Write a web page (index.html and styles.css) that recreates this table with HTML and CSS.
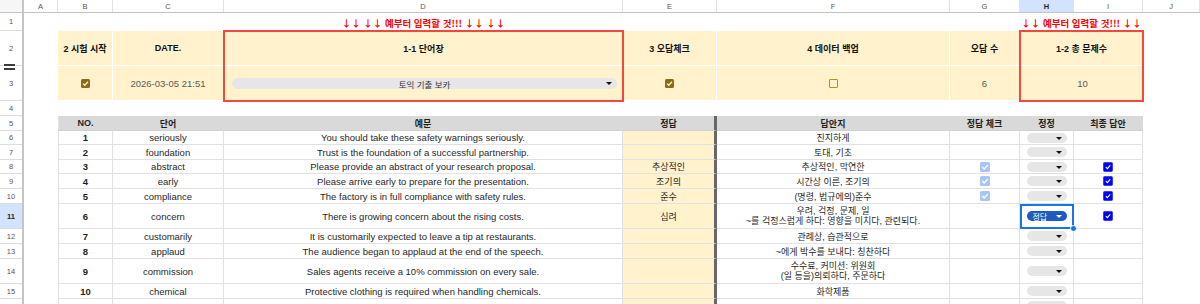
FILE: index.html
```html
<!DOCTYPE html>
<html lang="ko">
<head>
<meta charset="utf-8">
<title>Sheet</title>
<link rel="stylesheet" href="styles.css">
</head>
<body>
<div class="colbar">
  <div class="corner"></div>
  <div class="ch">A</div>
  <div class="ch">B</div>
  <div class="ch">C</div>
  <div class="ch">D</div>
  <div class="ch">E</div>
  <div class="ch">F</div>
  <div class="ch">G</div>
  <div class="ch ch-sel">H</div>
  <div class="ch">I</div>
  <div class="ch">J</div>
</div>
<div class="main">
  <div class="rowbar">
    <div class="rh">1</div>
    <div class="rh">2</div>
    <div class="rh">3</div>
    <div class="rh">4</div>
    <div class="rh">5</div>
    <div class="rh">6</div>
    <div class="rh">7</div>
    <div class="rh">8</div>
    <div class="rh">9</div>
    <div class="rh">10</div>
    <div class="rh rh-sel">11</div>
    <div class="rh">12</div>
    <div class="rh">13</div>
    <div class="rh">14</div>
    <div class="rh">15</div>
    <div class="rh rh-last">16</div>
    <div class="freeze"></div>
  </div>
  <div class="sheet">
    <!-- row 1 -->
    <div></div><div></div><div></div>
    <div class="c title">↓↓ ↓↓ 예부터 입력할 것!!! ↓↓ ↓↓</div>
    <div></div><div></div><div></div>
    <div class="c title span2">↓↓ 예부터 입력할 것!!! ↓↓</div>
    <div></div>
    <!-- row 2 -->
    <div></div>
    <div class="c p p-head">2 시험 시작</div>
    <div class="c p p-head">DATE.</div>
    <div class="box">
      <div class="c p p-head box-top">1-1 단어장</div>
      <div class="c p box-bot">
        <div class="select"><span>토익 기출 보카</span><i class="tri"></i></div>
      </div>
    </div>
    <div class="c p p-head">3 오답체크</div>
    <div class="c p p-head">4 데이터 백업</div>
    <div class="c p p-head">오답 수</div>
    <div class="box span2">
      <div class="c p p-head box-top">1-2 총 문제수</div>
      <div class="c p p-val box-bot">10</div>
    </div>
    <div></div>
    <!-- row 3 -->
    <div></div>
    <div class="c p"><svg class="cbx cb-gold" viewBox="0 0 10 10"><path d="M2.3 5.1 L4.2 7 L7.8 3.1"/></svg></div>
    <div class="c p p-val">2026-03-05 21:51</div>
    <div class="c p"><svg class="cbx cb-gold" viewBox="0 0 10 10"><path d="M2.3 5.1 L4.2 7 L7.8 3.1"/></svg></div>
    <div class="c p"><span class="cb-empty"></span></div>
    <div class="c p p-val">6</div>
    <div></div>
    <!-- row 4 -->
    <div class="gap-row"></div>
    <!-- row 5 header -->
    <div></div>
    <div class="c t th first">NO.</div>
    <div class="c t th">단어</div>
    <div class="c t th">예문</div>
    <div class="c t th sep">정답</div>
    <div class="c t th">답안지</div>
    <div class="c t th">정답 체크</div>
    <div class="c t th">정정</div>
    <div class="c t th">최종 답안</div>
    <div></div>
    <!-- row 6 -->
    <div></div>
    <div class="c t first num">1</div>
    <div class="c t">seriously</div>
    <div class="c t">You should take these safety warnings seriously.</div>
    <div class="c t ans sep"></div>
    <div class="c t ko">진지하게</div>
    <div class="c t"></div>
    <div class="c t"><div class="chip"><i class="tri"></i></div></div>
    <div class="c t"></div>
    <div></div>
    <!-- row 7 -->
    <div></div>
    <div class="c t first num">2</div>
    <div class="c t">foundation</div>
    <div class="c t">Trust is the foundation of a successful partnership.</div>
    <div class="c t ans sep"></div>
    <div class="c t ko">토대, 기초</div>
    <div class="c t"></div>
    <div class="c t"><div class="chip"><i class="tri"></i></div></div>
    <div class="c t"></div>
    <div></div>
    <!-- row 8 -->
    <div></div>
    <div class="c t first num">3</div>
    <div class="c t">abstract</div>
    <div class="c t">Please provide an abstract of your research proposal.</div>
    <div class="c t ans sep ko">추상적인</div>
    <div class="c t ko">추상적인, 막연한</div>
    <div class="c t"><svg class="cbx cb-light" viewBox="0 0 10 10"><path d="M2.3 5.1 L4.2 7 L7.8 3.1"/></svg></div>
    <div class="c t"><div class="chip"><i class="tri"></i></div></div>
    <div class="c t"><svg class="cbx cb-blue" viewBox="0 0 10 10"><path d="M2.3 5.1 L4.2 7 L7.8 3.1"/></svg></div>
    <div></div>
    <!-- row 9 -->
    <div></div>
    <div class="c t first num">4</div>
    <div class="c t">early</div>
    <div class="c t">Please arrive early to prepare for the presentation.</div>
    <div class="c t ans sep ko">조기의</div>
    <div class="c t ko">시간상 이른, 조기의</div>
    <div class="c t"><svg class="cbx cb-light" viewBox="0 0 10 10"><path d="M2.3 5.1 L4.2 7 L7.8 3.1"/></svg></div>
    <div class="c t"><div class="chip"><i class="tri"></i></div></div>
    <div class="c t"><svg class="cbx cb-blue" viewBox="0 0 10 10"><path d="M2.3 5.1 L4.2 7 L7.8 3.1"/></svg></div>
    <div></div>
    <!-- row 10 -->
    <div></div>
    <div class="c t first num">5</div>
    <div class="c t">compliance</div>
    <div class="c t">The factory is in full compliance with safety rules.</div>
    <div class="c t ans sep ko">준수</div>
    <div class="c t ko">(명령, 법규에의)준수</div>
    <div class="c t"><svg class="cbx cb-light" viewBox="0 0 10 10"><path d="M2.3 5.1 L4.2 7 L7.8 3.1"/></svg></div>
    <div class="c t"><div class="chip"><i class="tri"></i></div></div>
    <div class="c t"><svg class="cbx cb-blue" viewBox="0 0 10 10"><path d="M2.3 5.1 L4.2 7 L7.8 3.1"/></svg></div>
    <div></div>
    <!-- row 11 -->
    <div></div>
    <div class="c t first num">6</div>
    <div class="c t">concern</div>
    <div class="c t">There is growing concern about the rising costs.</div>
    <div class="c t ans sep ko">심려</div>
    <div class="c t ko multi">우려, 걱정, 문제, 일<br>~를 걱정스럽게 하다: 영향을 미치다, 관련되다.</div>
    <div class="c t"></div>
    <div class="c t selected"><div class="chip chip-on"><span>정답</span><i class="tri"></i></div><span class="handle"></span></div>
    <div class="c t"><svg class="cbx cb-blue" viewBox="0 0 10 10"><path d="M2.3 5.1 L4.2 7 L7.8 3.1"/></svg></div>
    <div></div>
    <!-- row 12 -->
    <div></div>
    <div class="c t first num">7</div>
    <div class="c t">customarily</div>
    <div class="c t">It is customarily expected to leave a tip at restaurants.</div>
    <div class="c t ans sep"></div>
    <div class="c t ko">관례상, 습관적으로</div>
    <div class="c t"></div>
    <div class="c t"><div class="chip"><i class="tri"></i></div></div>
    <div class="c t"></div>
    <div></div>
    <!-- row 13 -->
    <div></div>
    <div class="c t first num">8</div>
    <div class="c t">applaud</div>
    <div class="c t">The audience began to applaud at the end of the speech.</div>
    <div class="c t ans sep"></div>
    <div class="c t ko">~에게 박수를 보내다: 칭찬하다</div>
    <div class="c t"></div>
    <div class="c t"><div class="chip"><i class="tri"></i></div></div>
    <div class="c t"></div>
    <div></div>
    <!-- row 14 -->
    <div></div>
    <div class="c t first num">9</div>
    <div class="c t">commission</div>
    <div class="c t">Sales agents receive a 10% commission on every sale.</div>
    <div class="c t ans sep"></div>
    <div class="c t ko multi">수수료, 커미션: 위원회<br>(일 등을)의뢰하다, 주문하다</div>
    <div class="c t"></div>
    <div class="c t"><div class="chip"><i class="tri"></i></div></div>
    <div class="c t"></div>
    <div></div>
    <!-- row 15 -->
    <div></div>
    <div class="c t first num">10</div>
    <div class="c t">chemical</div>
    <div class="c t">Protective clothing is required when handling chemicals.</div>
    <div class="c t ans sep"></div>
    <div class="c t ko">화학제품</div>
    <div class="c t"></div>
    <div class="c t"><div class="chip"><i class="tri"></i></div></div>
    <div class="c t"></div>
    <div></div>
    <!-- row 16 -->
    <div></div>
    <div class="c t first num"></div>
    <div class="c t"></div>
    <div class="c t"></div>
    <div class="c t ans sep"></div>
    <div class="c t"></div>
    <div class="c t"></div>
    <div class="c t"><div class="chip"><i class="tri"></i></div></div>
    <div class="c t"></div>
    <div></div>
  </div>
</div>
</body>
</html>
```

FILE: styles.css
```css
* {
  box-sizing: border-box;
  margin: 0;
  padding: 0;
}

body {
  width: 1200px;
  height: 304px;
  overflow: hidden;
  background: #fff;
  font-family: "Liberation Sans", "Noto Sans CJK KR", sans-serif;
  color: #1f1f1f;
}

/* column header bar */
.colbar {
  display: grid;
  grid-template-columns: 24px 34px 55px 111px 399px 94px 233px 70px 54px 69px 1fr;
  height: 13px;
  border-bottom: 1px solid #c4c4c4;
  background: #fff;
}

.corner {
  background: #f6f6f6;
  border-right: 2px solid #c4c4c4;
}

.ch {
  display: flex;
  align-items: center;
  justify-content: center;
  font-size: 7.5px;
  color: #555;
  border-right: 1px solid #e0e0e0;
}

.ch-sel {
  background: #d3e3fd;
  color: #1f1f1f;
  font-weight: bold;
}

/* body */
.main {
  display: flex;
}

.rowbar,
.sheet {
  grid-template-rows: 18px 35px 35px 15px 15px 14px 15px 14px 15px 15px 25px 15px 15px 25px 15px 15px;
}

.rowbar {
  position: relative;
  flex: none;
  width: 24px;
  display: grid;
  border-right: 2px solid #c4c4c4;
}

.rh {
  display: flex;
  align-items: center;
  justify-content: center;
  font-size: 7.5px;
  color: #555;
  border-bottom: 1px solid #dcdcdc;
}

.rh-last {
  align-items: flex-start;
  padding-top: 3px;
}

.rh-sel {
  background: #d3e3fd;
  color: #1f1f1f;
  font-weight: bold;
}

.freeze {
  position: absolute;
  left: 4px;
  top: 51px;
  width: 11px;
  height: 6px;
  border-top: 2px solid #3c3c3c;
  border-bottom: 2px solid #3c3c3c;
}

.sheet {
  flex: 1;
  display: grid;
  grid-template-columns: 34px 55px 111px 399px 94px 233px 70px 54px 69px 1fr;
}

.c {
  display: flex;
  align-items: center;
  justify-content: center;
  white-space: nowrap;
  font-size: 9.5px;
}

.span2 {
  grid-column: span 2;
}

.title {
  color: #ff0000;
  font-family: "Noto Sans CJK KR", "Liberation Sans", sans-serif;
  font-weight: bold;
  font-size: 9.5px;
  padding-top: 1px;
}

/* yellow panel */
.p {
  background: #fff2cc;
  border-right: 1px solid #fff;
  border-bottom: 1px solid #fff;
}

.p-head {
  font-weight: bold;
  font-size: 9px;
  color: #111;
}

.p-val {
  color: #595959;
  font-size: 9.5px;
}

.box {
  grid-row: span 2;
  display: grid;
  grid-template-rows: 35px 35px;
  outline: 2px solid #f2483f;
  outline-offset: -1px;
  position: relative;
  z-index: 2;
}

.box-top,
.box-bot {
  border-right: none;
}

.box-bot {
  border-bottom: none;
  padding: 0 6px 0 8px;
}

.select {
  position: relative;
  width: 100%;
  height: 11px;
  border-radius: 6px;
  background: #e6e6e8;
  display: flex;
  align-items: center;
  justify-content: center;
  font-size: 8.5px;
  color: #333;
}

.select .tri {
  position: absolute;
  right: 5px;
  top: 4px;
}

.tri {
  display: block;
  width: 0;
  height: 0;
  border-left: 3px solid transparent;
  border-right: 3px solid transparent;
  border-top: 3px solid #111;
}

/* checkboxes */
.cbx {
  display: block;
  width: 10px;
  height: 10px;
  border-radius: 1.5px;
  fill: none;
  stroke: #fff;
  stroke-width: 1.4;
}

.cb-gold {
  width: 9px;
  height: 9px;
  background: #8b6b16;
  stroke: #fff2cc;
}

.cb-empty {
  display: block;
  width: 9px;
  height: 9px;
  border: 1.5px solid #b58d2a;
  border-radius: 1px;
}

.cb-light {
  background: #a8c5f7;
}

.cb-blue {
  background: #0000ff;
  border: 0.5px solid #3b3bff;
}

.gap-row {
  grid-column: 1 / -1;
}

/* table */
.t {
  border-right: 1px solid #e1e1e1;
  border-bottom: 1px solid #e1e1e1;
  color: #1f1f1f;
}

.first {
  border-left: 1px solid #e1e1e1;
}

.th {
  background: #d9d9d9;
  font-weight: bold;
  font-size: 9px;
  border-right-color: #d9d9d9;
  border-bottom-color: #d0d0d0;
}

.num {
  font-weight: bold;
}

.ko {
  font-size: 9px;
}

.ans {
  background: #fff2cc;
}

.sep {
  border-right: 3px solid #676767;
}

.multi {
  white-space: nowrap;
  text-align: center;
  line-height: 10px;
}

.chip {
  position: relative;
  width: 40px;
  height: 10px;
  border-radius: 5px;
  background: #e6e6e6;
}

.chip .tri {
  position: absolute;
  right: 5px;
  top: 4px;
}

.chip-on {
  background: #1d5bbd;
  display: flex;
  align-items: center;
  padding-left: 6px;
  font-size: 8px;
  color: #fff;
}

.chip-on .tri {
  border-top-color: #fff;
}

.selected {
  position: relative;
  outline: 2px solid #1a73e8;
  outline-offset: -2px;
  z-index: 2;
}

.handle {
  position: absolute;
  right: -4px;
  bottom: -4px;
  width: 7px;
  height: 7px;
  border-radius: 50%;
  background: #1a73e8;
  border: 1px solid #fff;
}
```
